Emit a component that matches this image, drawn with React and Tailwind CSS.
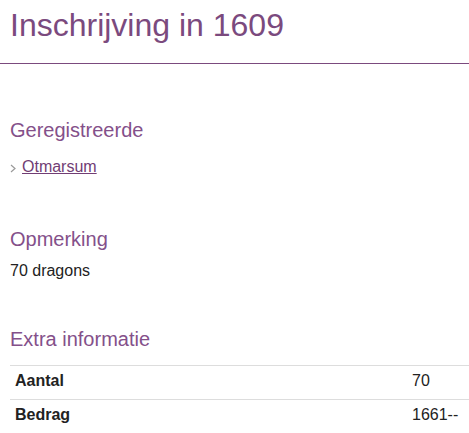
export default function App() {
    const rows = [
        { label: "Aantal", value: "70" },
        { label: "Bedrag", value: "1661--" },
    ];
    return (
        <div className="bg-white min-h-screen text-[16px] leading-[20px] text-[#222]" style={{ fontFamily: '"Liberation Sans", Arial, sans-serif' }}>
            <div className="border-b border-[#7b4a7e] pb-[18px] pt-[5px]">
                <h1 className="pl-[10px] text-[32px] leading-[40px] text-[#7b4a7e]">Inschrijving in 1609</h1>
            </div>

            <div className="px-[10px]">
                <h2 className="mt-[54px] text-[20px] leading-[24px] text-[#84508a]">Geregistreerde</h2>
                <div className="mt-[15px] flex items-center gap-[6px]">
                    <svg width="6" height="9" viewBox="0 0 6 9" className="mt-[2px]">
                        <polyline points="1,1 5,4.5 1,8" fill="none" stroke="#9a9a9a" strokeWidth="1.2" />
                    </svg>
                    <a href="#" className="underline text-[#713d74]">Otmarsum</a>
                </div>

                <h2 className="mt-[50px] text-[20px] leading-[24px] text-[#84508a]">Opmerking</h2>
                <p className="mt-[10px]">70 dragons</p>

                <h2 className="mt-[46px] text-[20px] leading-[24px] text-[#84508a]">Extra informatie</h2>
            </div>

            <div className="ml-[10px] mt-[14px]">
                {rows.map((row) => (
                    <div key={row.label} className="grid grid-cols-[397px_1fr] border-t border-[#dddddd]">
                        <div className="px-[5px] pt-[5px] pb-[8px] font-bold">{row.label}</div>
                        <div className="px-[5px] pt-[5px] pb-[8px]">{row.value}</div>
                    </div>
                ))}
            </div>
        </div>
    )
}
